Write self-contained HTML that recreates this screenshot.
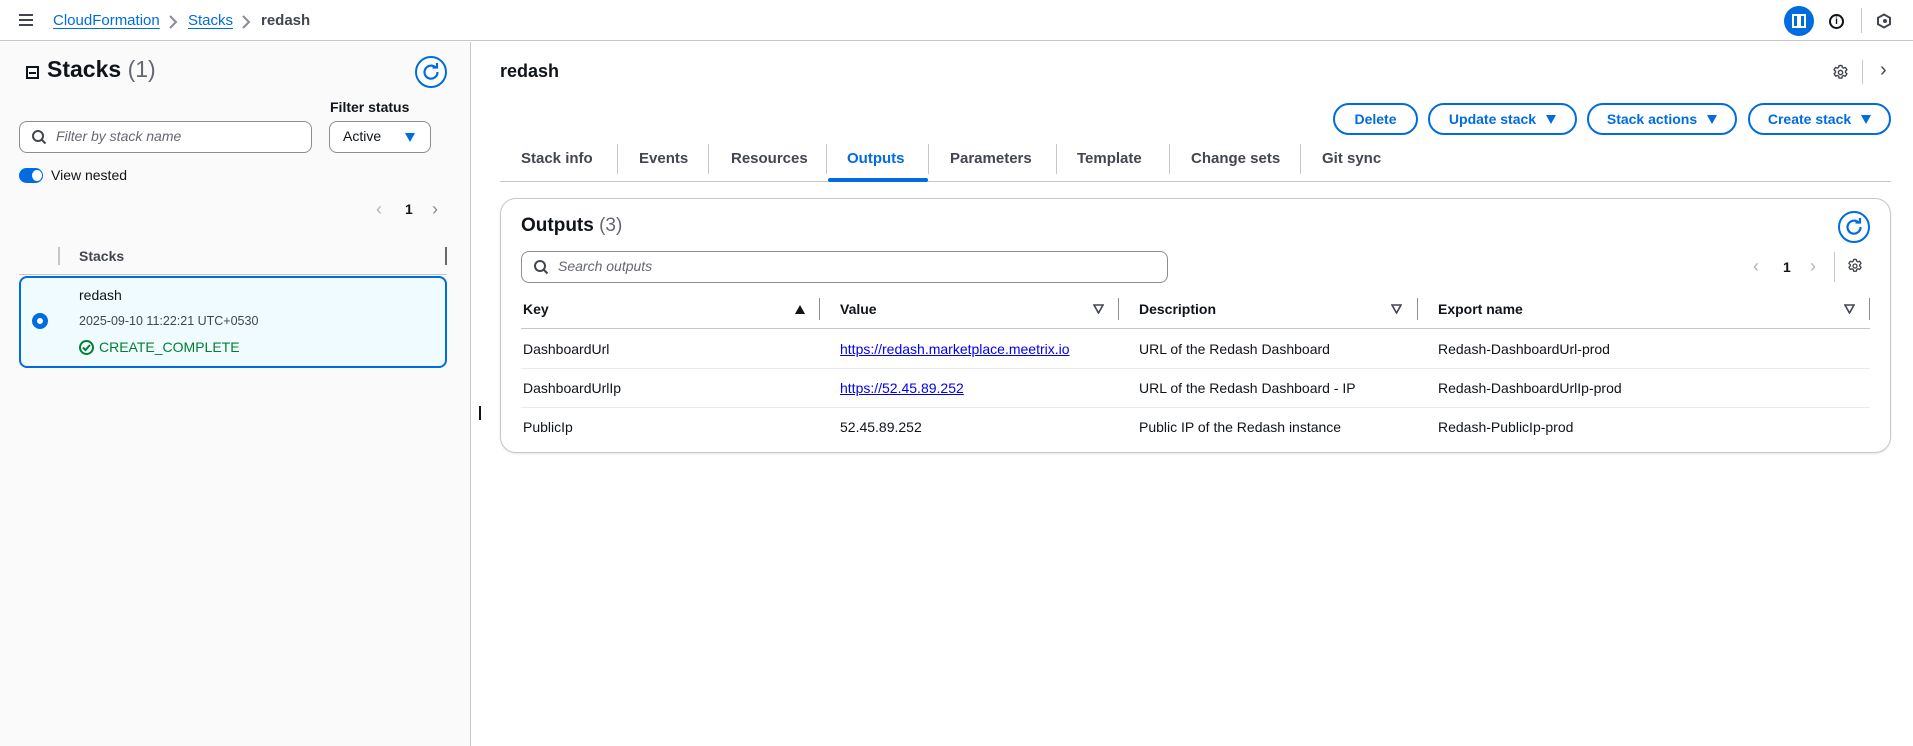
<!DOCTYPE html>
<html><head><style>
*{box-sizing:border-box;margin:0;padding:0}
body{width:1913px;height:746px;overflow:hidden;background:#fff;font-family:"Liberation Sans",sans-serif;color:#0f141a;font-size:14px;position:relative}
.a{position:absolute}
.lnk{color:#006ce0;text-decoration:underline;text-underline-offset:3px}
.btn{position:absolute;top:103px;height:32px;border:2px solid #006ce0;border-radius:16px;color:#006ce0;font-weight:bold;font-size:14px;display:flex;align-items:center;justify-content:center;gap:10px;background:#fff}
.tri{width:0;height:0;border-left:5px solid transparent;border-right:5px solid transparent;border-top:9px solid #006ce0}
.tab{position:absolute;top:150px;font-size:15px;font-weight:bold;color:#424650}
.tsep{position:absolute;top:144px;height:30px;width:1px;background:#c6c6cd}
.th{position:absolute;top:301px;font-weight:bold;font-size:14px}
.cs{position:absolute;top:298px;width:1px;height:22px;background:#8c8c94}
.td{position:absolute;font-size:14px}
</style></head><body>
<div class="a" style="left:0;top:0;width:1913px;height:41px;border-bottom:1px solid #c6c6cd;background:#fff"></div>
<div class="a" style="left:19px;top:14px;width:14px;height:2px;background:#424650;box-shadow:0 5px 0 #424650,0 10px 0 #424650"></div>
<div class="a lnk" style="left:53px;top:12px;font-size:15px">CloudFormation</div>
<svg class="a" style="left:168px;top:15px" width="10" height="14"><path d="M2 1 L8 7 L2 13" fill="none" stroke="#8c8c94" stroke-width="2"/></svg>
<div class="a lnk" style="left:188px;top:12px;font-size:15px">Stacks</div>
<svg class="a" style="left:241px;top:15px" width="10" height="14"><path d="M2 1 L8 7 L2 13" fill="none" stroke="#8c8c94" stroke-width="2"/></svg>
<div class="a" style="left:261px;top:12px;font-size:15px;font-weight:bold;color:#424650">redash</div>
<div class="a" style="left:1784px;top:6px;width:30px;height:30px;border-radius:50%;background:#006ce0"></div>
<div class="a" style="left:1792px;top:14px;width:14px;height:14px;border:2px solid #fff"></div>
<div class="a" style="left:1797px;top:15px;width:4px;height:12px;background:#fff"></div>
<div class="a" style="left:1829px;top:14px;width:15px;height:15px;border:2px solid #0f141a;border-radius:50%;font-size:10px;font-weight:bold;text-align:center;line-height:11px">i</div>
<div class="a" style="left:1861px;top:8px;width:1px;height:25px;background:#c6c6cd"></div>
<svg class="a" style="left:1876px;top:13px" width="16" height="16" viewBox="0 0 16 16"><path d="M8 1.5 L14 4.8 V11.2 L8 14.5 L2 11.2 V4.8Z" fill="none" stroke="#424650" stroke-width="2"/><circle cx="9" cy="8" r="2" fill="#424650"/></svg>
<div class="a" style="left:0;top:42px;width:471px;height:704px;background:#fafafa;border-right:1px solid #c6c6cd"></div>
<div class="a" style="left:26px;top:66px;width:13px;height:13px;border:2px solid #0f141a"><div style="margin:3.5px 1px;height:2px;background:#0f141a"></div></div>
<div class="a" style="left:47px;top:56px;font-size:23px;font-weight:bold">Stacks <span style="font-weight:normal;color:#656871">(1)</span></div>
<svg class="a" style="left:415px;top:56px" width="32" height="32" viewBox="0 0 32 32"><circle cx="16" cy="16" r="15" fill="#fff" stroke="#006ce0" stroke-width="2"/><path d="M21 12 A6.5 6.5 0 1 0 22.5 16" fill="none" stroke="#006ce0" stroke-width="2.2"/><path d="M17.5 11.5 H22 V7" fill="none" stroke="#006ce0" stroke-width="2.2"/></svg>
<div class="a" style="left:330px;top:99px;font-weight:bold;font-size:14px">Filter status</div>
<div class="a" style="left:19px;top:121px;width:293px;height:32px;border:1px solid #8c8c94;border-radius:8px;background:#fff"></div>
<svg class="a" style="left:31px;top:129px" width="16" height="16" viewBox="0 0 16 16"><circle cx="7" cy="7" r="5" fill="none" stroke="#424650" stroke-width="2"/><path d="M11 11 L14.5 14.5" stroke="#424650" stroke-width="2"/></svg>
<div class="a" style="left:56px;top:128px;font-style:italic;color:#656871">Filter by stack name</div>
<div class="a" style="left:329px;top:121px;width:102px;height:32px;border:1px solid #8c8c94;border-radius:8px;background:#fff"></div>
<div class="a" style="left:343px;top:128px">Active</div>
<div class="a tri" style="left:405px;top:133px"></div>
<div class="a" style="left:19px;top:168px;width:24px;height:15px;border-radius:8px;background:#006ce0"></div>
<div class="a" style="left:32px;top:170px;width:10px;height:11px;border-radius:50%;background:#fff"></div>
<div class="a" style="left:51px;top:167px;font-size:14px">View nested</div>
<div class="a" style="left:376px;top:199px;font-size:18px;color:#b4b4bb">‹</div>
<div class="a" style="left:405px;top:201px;font-weight:bold">1</div>
<div class="a" style="left:432px;top:199px;font-size:18px;color:#8c8c94">›</div>
<div class="a" style="left:58px;top:247px;width:2px;height:18px;background:#c6c6cd"></div>
<div class="a" style="left:79px;top:248px;font-weight:bold;color:#424650">Stacks</div>
<div class="a" style="left:445px;top:247px;width:2px;height:18px;background:#656871"></div>
<div class="a" style="left:19px;top:274px;width:428px;height:1px;background:#c6c6cd"></div>
<div class="a" style="left:19px;top:276px;width:428px;height:92px;border:2px solid #006ce0;border-radius:8px;background:#f0fbff"></div>
<div class="a" style="left:32px;top:313px;width:16px;height:16px;border-radius:50%;border:5px solid #006ce0;background:#fff"></div>
<div class="a" style="left:79px;top:287px;font-size:14px">redash</div>
<div class="a" style="left:79px;top:314px;font-size:12.5px;color:#424650">2025-09-10 11:22:21 UTC+0530</div>
<div class="a" style="left:79px;top:340px;width:15px;height:15px;border:2px solid #00802f;border-radius:50%"></div>
<svg class="a" style="left:79px;top:340px" width="15" height="15"><path d="M4 7.5 L6.5 10 L11 5" fill="none" stroke="#00802f" stroke-width="2"/></svg>
<div class="a" style="left:99px;top:339px;font-size:14px;color:#00802f">CREATE_COMPLETE</div>
<div class="a" style="left:479px;top:406px;width:2px;height:14px;background:#0f141a"></div>
<div class="a" style="left:500px;top:61px;font-size:18px;font-weight:bold">redash</div>
<svg class="a" style="left:1832px;top:64px" width="17" height="17" viewBox="0 0 24 24"><path d="M12 2l2 .3.6 2.5 1.8 1 2.4-.9 1.3 1.6.9 1.7-1.9 1.8v2l1.9 1.8-.9 1.7-1.3 1.6-2.4-.9-1.8 1-.6 2.5-2 .3-2-.3-.6-2.5-1.8-1-2.4.9-1.3-1.6-.9-1.7 1.9-1.8v-2L2.9 8.2l.9-1.7 1.3-1.6 2.4.9 1.8-1L10 2.3z" fill="none" stroke="#424650" stroke-width="2"/><circle cx="12" cy="12" r="3" fill="none" stroke="#424650" stroke-width="2"/></svg>
<div class="a" style="left:1862px;top:60px;width:1px;height:24px;background:#c6c6cd"></div>
<div class="a" style="left:1880px;top:59px;font-size:20px;color:#424650">›</div>
<div class="btn" style="left:1333px;width:85px">Delete</div>
<div class="btn" style="left:1428px;width:149px">Update stack<span class="tri"></span></div>
<div class="btn" style="left:1587px;width:150px">Stack actions<span class="tri"></span></div>
<div class="btn" style="left:1748px;width:143px">Create stack<span class="tri"></span></div>
<div class="tab" style="left:521px">Stack info</div>
<div class="tsep" style="left:617px"></div>
<div class="tab" style="left:639px">Events</div>
<div class="tsep" style="left:708px"></div>
<div class="tab" style="left:731px">Resources</div>
<div class="tsep" style="left:826px"></div>
<div class="tab" style="left:847px;color:#006ce0">Outputs</div>
<div class="tsep" style="left:928px"></div>
<div class="tab" style="left:950px">Parameters</div>
<div class="tsep" style="left:1056px"></div>
<div class="tab" style="left:1077px">Template</div>
<div class="tsep" style="left:1169px"></div>
<div class="tab" style="left:1191px">Change sets</div>
<div class="tsep" style="left:1300px"></div>
<div class="tab" style="left:1322px">Git sync</div>
<div class="a" style="left:500px;top:181px;width:1391px;height:1px;background:#c6c6cd"></div>
<div class="a" style="left:828px;top:178px;width:100px;height:4px;background:#006ce0;border-radius:2px"></div>
<div class="a" style="left:500px;top:198px;width:1391px;height:255px;border:1px solid #c6c6cd;border-radius:16px;box-shadow:0 1px 2px rgba(0,0,0,.1)"></div>
<div class="a" style="left:521px;top:215px;font-size:19px;font-weight:bold">Outputs <span style="font-weight:normal;color:#656871">(3)</span></div>
<svg class="a" style="left:1838px;top:211px" width="32" height="32" viewBox="0 0 32 32"><circle cx="16" cy="16" r="15" fill="#fff" stroke="#006ce0" stroke-width="2"/><path d="M21 12 A6.5 6.5 0 1 0 22.5 16" fill="none" stroke="#006ce0" stroke-width="2.2"/><path d="M17.5 11.5 H22 V7" fill="none" stroke="#006ce0" stroke-width="2.2"/></svg>
<div class="a" style="left:521px;top:251px;width:647px;height:32px;border:1px solid #8c8c94;border-radius:8px"></div>
<svg class="a" style="left:533px;top:259px" width="16" height="16" viewBox="0 0 16 16"><circle cx="7" cy="7" r="5" fill="none" stroke="#424650" stroke-width="2"/><path d="M11 11 L14.5 14.5" stroke="#424650" stroke-width="2"/></svg>
<div class="a" style="left:558px;top:258px;font-style:italic;color:#656871">Search outputs</div>
<div class="a" style="left:1753px;top:256px;font-size:18px;color:#b4b4bb">‹</div>
<div class="a" style="left:1783px;top:259px;font-weight:bold">1</div>
<div class="a" style="left:1810px;top:256px;font-size:18px;color:#b4b4bb">›</div>
<div class="a" style="left:1834px;top:252px;width:1px;height:30px;background:#c6c6cd"></div>
<svg class="a" style="left:1847px;top:258px" width="16" height="16" viewBox="0 0 24 24"><path d="M12 2l2 .3.6 2.5 1.8 1 2.4-.9 1.3 1.6.9 1.7-1.9 1.8v2l1.9 1.8-.9 1.7-1.3 1.6-2.4-.9-1.8 1-.6 2.5-2 .3-2-.3-.6-2.5-1.8-1-2.4.9-1.3-1.6-.9-1.7 1.9-1.8v-2L2.9 8.2l.9-1.7 1.3-1.6 2.4.9 1.8-1L10 2.3z" fill="none" stroke="#424650" stroke-width="2"/><circle cx="12" cy="12" r="3" fill="none" stroke="#424650" stroke-width="2"/></svg>
<div class="th" style="left:523px">Key</div>
<div class="a" style="left:795px;top:305px;width:0;height:0;border-left:5px solid transparent;border-right:5px solid transparent;border-bottom:9px solid #0f141a"></div>
<div class="cs" style="left:819px"></div>
<div class="th" style="left:840px">Value</div>
<svg class="a" style="left:1093px;top:304px" width="11" height="10"><path d="M1 1 H10 L5.5 9Z" fill="none" stroke="#424650" stroke-width="1.6"/></svg>
<div class="cs" style="left:1118px"></div>
<div class="th" style="left:1139px">Description</div>
<svg class="a" style="left:1391px;top:304px" width="11" height="10"><path d="M1 1 H10 L5.5 9Z" fill="none" stroke="#424650" stroke-width="1.6"/></svg>
<div class="cs" style="left:1417px"></div>
<div class="th" style="left:1438px">Export name</div>
<svg class="a" style="left:1844px;top:304px" width="11" height="10"><path d="M1 1 H10 L5.5 9Z" fill="none" stroke="#424650" stroke-width="1.6"/></svg>
<div class="cs" style="left:1869px"></div>
<div class="a" style="left:521px;top:328px;width:1349px;height:1px;background:#c6c6cd"></div>
<div class="a" style="left:521px;top:368px;width:1349px;height:1px;background:#e9ebed"></div>
<div class="a" style="left:521px;top:407px;width:1349px;height:1px;background:#e9ebed"></div>
<div class="td" style="left:523px;top:341px">DashboardUrl</div>
<div class="td" style="left:840px;top:341px;color:#0000ee;text-decoration:underline">https://redash.marketplace.meetrix.io</div>
<div class="td" style="left:1139px;top:341px">URL of the Redash Dashboard</div>
<div class="td" style="left:1438px;top:341px">Redash-DashboardUrl-prod</div>
<div class="td" style="left:523px;top:380px">DashboardUrlIp</div>
<div class="td" style="left:840px;top:380px;color:#0000ee;text-decoration:underline">https://52.45.89.252</div>
<div class="td" style="left:1139px;top:380px">URL of the Redash Dashboard - IP</div>
<div class="td" style="left:1438px;top:380px">Redash-DashboardUrlIp-prod</div>
<div class="td" style="left:523px;top:419px">PublicIp</div>
<div class="td" style="left:840px;top:419px">52.45.89.252</div>
<div class="td" style="left:1139px;top:419px">Public IP of the Redash instance</div>
<div class="td" style="left:1438px;top:419px">Redash-PublicIp-prod</div>
</body></html>
